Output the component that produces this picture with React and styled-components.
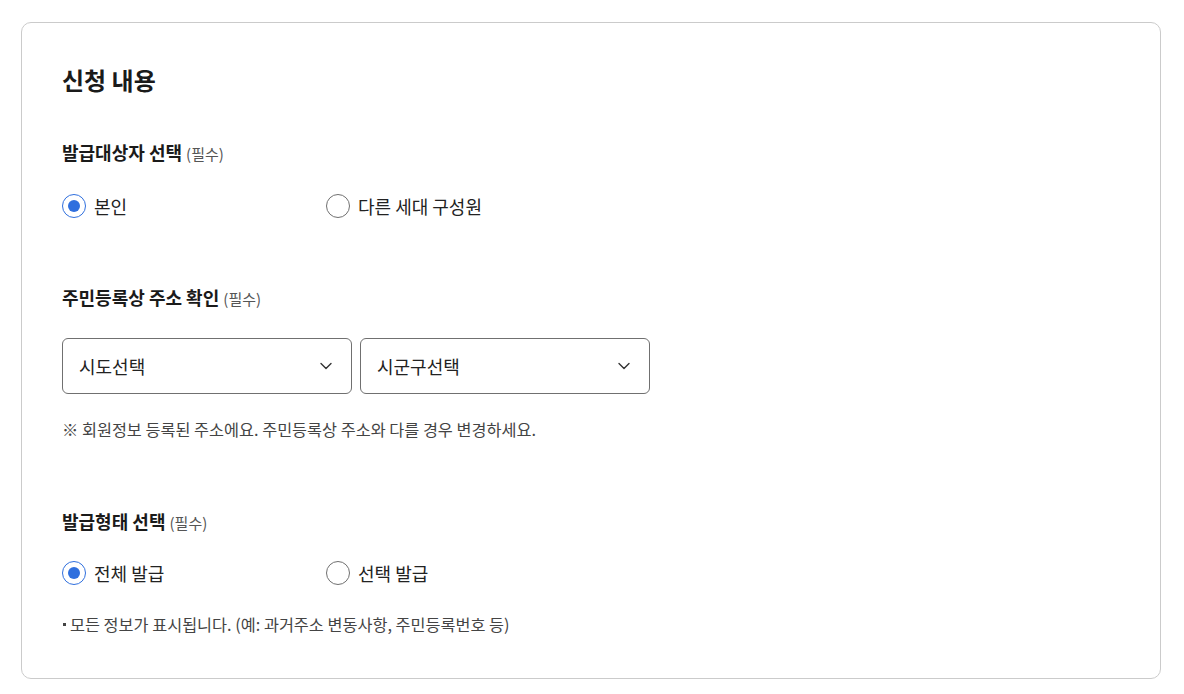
import styled, { createGlobalStyle } from "styled-components";

const GlobalStyle = createGlobalStyle`
  body {
    margin: 0;
    background: #fff;
    font-family: "Noto Sans CJK KR", "Noto Sans", sans-serif;
    color: #1e1e1e;
  }
`;

function Radio({ label, checked }) {
  return (
    <RadioLabel>
      <RadioCircle $checked={checked} />
      <span>{label}</span>
    </RadioLabel>
  );
}

function Select({ placeholder }) {
  return (
    <SelectBox>
      <span>{placeholder}</span>
      <svg width="14" height="14" viewBox="0 0 14 14" fill="none">
        <path
          d="M2 4.5l5 5 5-5"
          stroke="#333"
          strokeWidth="1.4"
          strokeLinecap="round"
          strokeLinejoin="round"
        />
      </svg>
    </SelectBox>
  );
}

function App() {
  return (
    <Page>
      <GlobalStyle />
      <Card>
        <Title>신청 내용</Title>

        <Label $gap={44}>
          발급대상자 선택 <Required>(필수)</Required>
        </Label>
        <RadioRow $gap={28}>
          <Radio label="본인" checked />
          <Radio label="다른 세대 구성원" />
        </RadioRow>

        <Label $gap={67}>
          주민등록상 주소 확인 <Required>(필수)</Required>
        </Label>
        <SelectRow>
          <Select placeholder="시도선택" />
          <Select placeholder="시군구선택" />
        </SelectRow>
        <Note>※ 회원정보 등록된 주소에요. 주민등록상 주소와 다를 경우 변경하세요.</Note>

        <Label $gap={68}>
          발급형태 선택 <Required>(필수)</Required>
        </Label>
        <RadioRow $gap={26}>
          <Radio label="전체 발급" checked />
          <Radio label="선택 발급" />
        </RadioRow>
        <Bullet>모든 정보가 표시됩니다. (예: 과거주소 변동사항, 주민등록번호 등)</Bullet>
      </Card>
    </Page>
  );
}

const Page = styled.div`
  padding: 22px 23px 0 21px;
`;

const Card = styled.div`
  border: 1px solid #cbcbcb;
  border-radius: 10px;
  padding: 41px 40px 0;
  height: 657px;
  box-sizing: border-box;
`;

const Title = styled.h2`
  margin: 0;
  font-size: 24px;
  font-weight: 700;
  line-height: 32px;
  color: #1a1a1a;
`;

const Label = styled.div`
  margin-top: ${(p) => p.$gap}px;
  font-size: 18px;
  font-weight: 700;
  line-height: 24px;
  color: #1a1a1a;
`;

const Required = styled.span`
  font-size: 15px;
  font-weight: 400;
  color: #555;
`;

const RadioRow = styled.div`
  display: grid;
  grid-template-columns: 264px 264px;
  margin-top: ${(p) => p.$gap}px;
`;

const RadioLabel = styled.label`
  display: flex;
  align-items: center;
  gap: 8px;
  font-size: 18px;
  color: #222;
  line-height: 24px;
`;

const RadioCircle = styled.span`
  width: 24px;
  height: 24px;
  box-sizing: border-box;
  border-radius: 50%;
  border: 1.5px solid ${(p) => (p.$checked ? "#2f6fde" : "#707070")};
  display: flex;
  align-items: center;
  justify-content: center;
  &::after {
    content: "";
    width: 12px;
    height: 12px;
    border-radius: 50%;
    background: #2f6fde;
    display: ${(p) => (p.$checked ? "block" : "none")};
  }
`;

const SelectRow = styled.div`
  display: flex;
  gap: 8px;
  margin-top: 27px;
`;

const SelectBox = styled.div`
  width: 290px;
  height: 56px;
  box-sizing: border-box;
  border: 1px solid #707070;
  border-radius: 6px;
  padding: 0 18px 0 16px;
  display: flex;
  align-items: center;
  justify-content: space-between;
  font-size: 18px;
  color: #222;
`;

const Note = styled.p`
  margin: 23px 0 0;
  font-size: 16.3px;
  line-height: 24px;
  color: #444;
`;

const Bullet = styled.p`
  margin: 27px 0 0;
  font-size: 16.3px;
  line-height: 24px;
  color: #444;
  display: flex;
  align-items: center;
  &::before {
    content: "";
    width: 3px;
    height: 3px;
    background: #444;
    margin: 0 4px 0 1px;
  }
`;

export default App;
